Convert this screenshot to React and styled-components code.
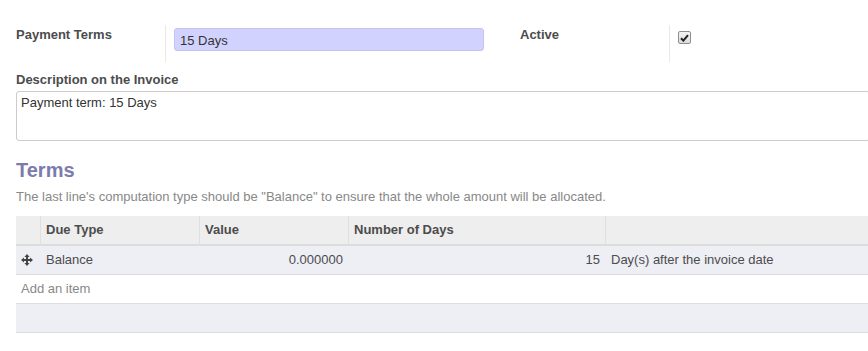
import React from 'react';
import styled, { createGlobalStyle } from 'styled-components';

const Global = createGlobalStyle`
  html, body { margin: 0; padding: 0; background: #fff; overflow: hidden; }
  body { font-family: "Liberation Sans", Arial, sans-serif; font-size: 13px; color: #4c4c4c; }
`;

const Sheet = styled.div`
  width: 870px;
  padding: 25px 0 0 16px;
  box-sizing: border-box;
`;

const GroupRow = styled.div`
  display: grid;
  grid-template-columns: 150px 318px 36px 150px 1fr;
  align-items: start;
`;

const Label = styled.div`
  font-weight: bold;
  height: 37px;
  padding-top: 2px;
  line-height: 16px;
  box-sizing: border-box;
  border-right: 1px solid #e8e8e8;
`;

const Field = styled.div`
  padding: 3px 0 0 8px;
`;

const Input = styled.div`
  height: 23px;
  line-height: 23px;
  padding: 0 5px;
  background: #d2d2ff;
  border: 1px solid #c4c4f2;
  border-radius: 3px;
  box-sizing: border-box;
  color: #333;
`;

const Check = styled.span`
  display: inline-flex;
  align-items: center;
  justify-content: center;
  width: 13px;
  height: 13px;
  margin: 3px 0 0 0;
  border: 1px solid #8f8f8f;
  border-radius: 2px;
  background: linear-gradient(#f4f4f4, #dcdcdc);
  box-sizing: border-box;
`;

const BlockLabel = styled.div`
  font-weight: bold;
  margin-top: 10px;
  line-height: 16px;
`;

const TextBox = styled.div`
  margin-top: 3px;
  height: 50px;
  padding: 3px 4px;
  border: 1px solid #ccc;
  border-radius: 3px;
  box-sizing: border-box;
  color: #333;
  line-height: 16px;
`;

const Heading = styled.h2`
  margin: 18px 0 0;
  font-size: 20px;
  line-height: 22px;
  font-weight: bold;
  color: #7c7bad;
`;

const Hint = styled.p`
  margin: 7px 0 0;
  color: #888;
  line-height: 18px;
`;

const Table = styled.div`
  margin-top: 10px;
`;

const Cols = `
  display: grid;
  grid-template-columns: 24px 159px 149px 257px 1fr;
`;

const HeadRow = styled.div`
  ${Cols}
  height: 30px;
  background: #eee;
  border-bottom: 2px solid #ddd;
  box-sizing: border-box;
`;

const HeadCell = styled.div`
  font-weight: bold;
  padding: 0 5px;
  line-height: 28px;
  border-left: ${p => (p.first ? 'none' : '1px solid #e0e0e0')};
`;

const BodyRow = styled.div`
  ${Cols}
  height: 29px;
  line-height: 28px;
  background: #eeeef5;
  border-bottom: 1px solid #ddd;
  box-sizing: border-box;
  color: #4c4c4c;
`;

const Cell = styled.div`
  display: flex;
  align-items: center;
  padding: 0 5px 0 ${p => (p.center ? '2px' : '6px')};
  justify-content: ${p => (p.center ? 'center' : p.right ? 'flex-end' : 'flex-start')};
`;

const AddRow = styled.div`
  height: 29px;
  line-height: 28px;
  padding-left: 5px;
  color: #888;
  border-bottom: 1px solid #ddd;
  box-sizing: border-box;
`;

const FootRow = styled.div`
  height: 29px;
  background: #eeeef5;
  border-bottom: 1px solid #ddd;
  box-sizing: border-box;
`;

const MoveIcon = () => (
  <svg width="12" height="12" viewBox="0 0 12 12">
    <path d="M6 0 L8.6 3 H3.4 Z M6 12 L3.4 9 H8.6 Z M0 6 L3 3.4 V8.6 Z M12 6 L9 8.6 V3.4 Z" fill="#444" />
    <rect x="5" y="2.5" width="2" height="7" fill="#444" />
    <rect x="2.5" y="5" width="7" height="2" fill="#444" />
  </svg>
);

export default function App() {
  return (
    <>
      <Global />
      <Sheet>
        <GroupRow>
          <Label>Payment Terms</Label>
          <Field><Input>15 Days</Input></Field>
          <div />
          <Label>Active</Label>
          <Field>
            <Check>
              <svg width="9" height="8" viewBox="0 0 9 8">
                <path d="M1 4.2 L3.4 6.6 L8 1.2" stroke="#222" strokeWidth="2" fill="none" />
              </svg>
            </Check>
          </Field>
        </GroupRow>

        <BlockLabel>Description on the Invoice</BlockLabel>
        <TextBox>Payment term: 15 Days</TextBox>

        <Heading>Terms</Heading>
        <Hint>The last line's computation type should be "Balance" to ensure that the whole amount will be allocated.</Hint>

        <Table>
          <HeadRow>
            <HeadCell first />
            <HeadCell>Due Type</HeadCell>
            <HeadCell>Value</HeadCell>
            <HeadCell>Number of Days</HeadCell>
            <HeadCell />
          </HeadRow>
          <BodyRow>
            <Cell center><MoveIcon /></Cell>
            <Cell>Balance</Cell>
            <Cell right>0.000000</Cell>
            <Cell right>15</Cell>
            <Cell>Day(s) after the invoice date</Cell>
          </BodyRow>
          <AddRow>Add an item</AddRow>
          <FootRow />
        </Table>
      </Sheet>
    </>
  );
}
